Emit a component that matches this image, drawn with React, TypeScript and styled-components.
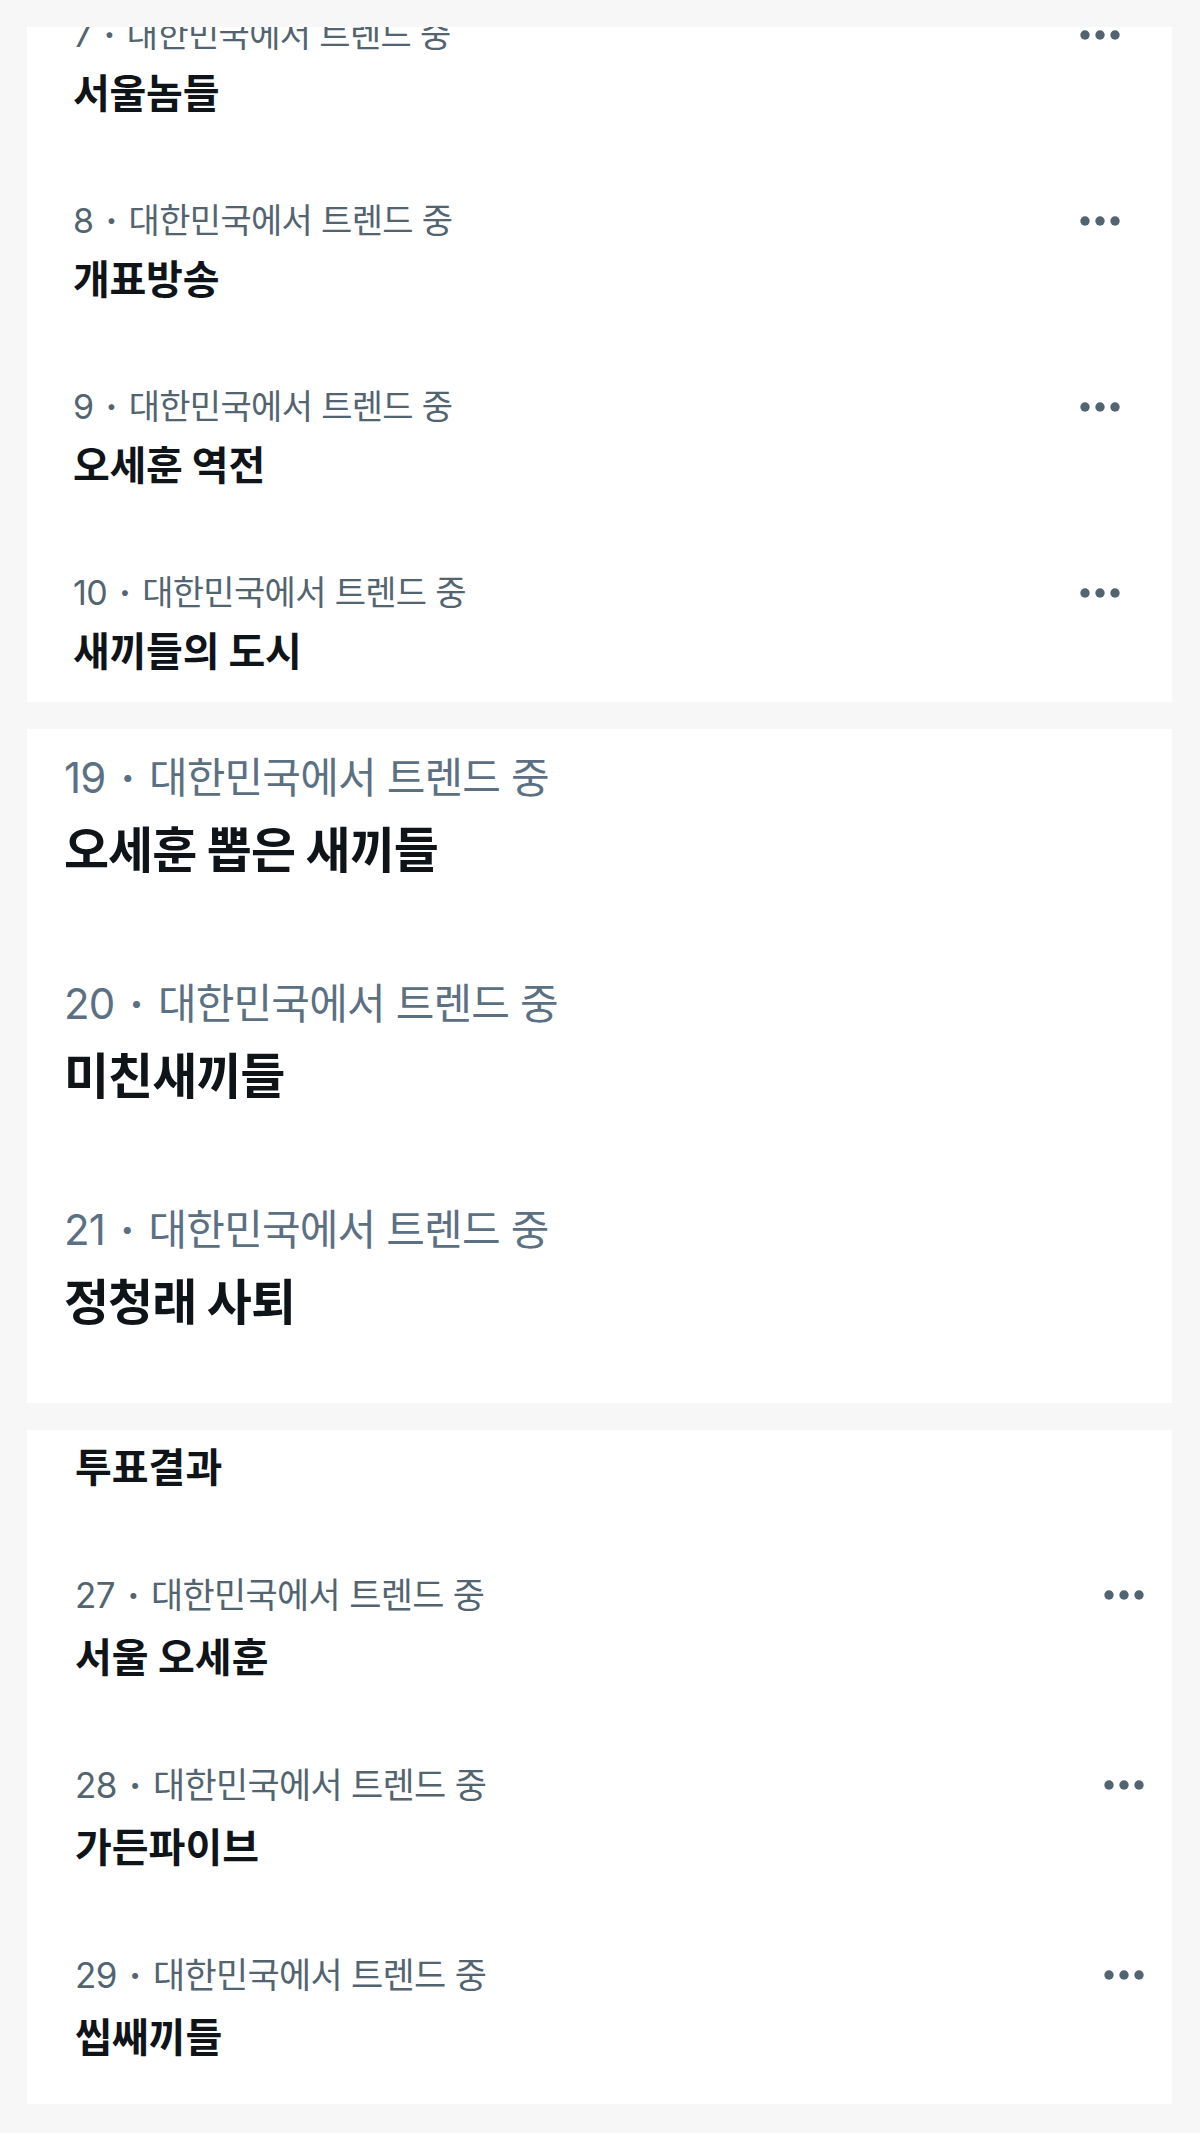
import styled, { createGlobalStyle } from 'styled-components';

interface Look {
  metaSize: number;
  metaLine: number;
  titleSize: number;
  titleLine: number;
  titleSpacing: number;
  padTop: number;
  gap: number;
  padBottom: number;
  padLeft: number;
  padRight: number;
  metaColor: string;
  moreWidth?: number;
}

interface Trend {
  rank: number;
  title: string;
}

const GlobalStyle = createGlobalStyle`
  html, body {
    margin: 0;
    padding: 0;
    background: #f7f7f7;
  }
  body {
    font-family: Inter, "Noto Sans CJK KR", sans-serif;
    -webkit-font-smoothing: antialiased;
  }
`;

const Page = styled.div`
  display: flex;
  flex-direction: column;
  gap: 27px;
  padding: 27px 28px 28px 27px;
  background: #f7f7f7;
`;

const Card = styled.section<{ $height: number }>`
  height: ${(p) => p.$height}px;
  overflow: hidden;
  background: #ffffff;
`;

// the lists are screenshots of a scrolled timeline, so the first row may sit above the card top
const TrendList = styled.div<{ $scroll: number }>`
  margin-top: ${(p) => -p.$scroll}px;
`;

const Row = styled.div<{ $look: Look }>`
  display: flex;
  justify-content: space-between;
  align-items: flex-start;
  padding: ${(p) =>
    `${p.$look.padTop}px ${p.$look.padRight}px ${p.$look.padBottom}px ${p.$look.padLeft}px`};
`;

const TextBlock = styled.div`
  display: flex;
  flex-direction: column;
`;

const Meta = styled.div<{ $look: Look }>`
  font-size: ${(p) => p.$look.metaSize}px;
  line-height: ${(p) => p.$look.metaLine}px;
  letter-spacing: -0.02em;
  color: ${(p) => p.$look.metaColor};
  font-weight: 400;
  white-space: nowrap;
`;

const Sep = styled.span`
  margin: 0 0.1em;
  font-weight: 700;
`;

const Title = styled.div<{ $look: Look }>`
  margin-top: ${(p) => p.$look.gap}px;
  font-size: ${(p) => p.$look.titleSize}px;
  line-height: ${(p) => p.$look.titleLine}px;
  letter-spacing: ${(p) => p.$look.titleSpacing}px;
  font-weight: 700;
  color: #0f1419;
  white-space: nowrap;
`;

const More = styled.div<{ $look: Look }>`
  display: flex;
  align-items: center;
  height: ${(p) => p.$look.metaLine}px;
  color: #536471;
`;

const MoreDots = ({ width }: { width: number }) => (
  <svg width={width} height={10} viewBox="0 0 40 10" fill="currentColor">
    <circle cx="5" cy="5" r="4.7" />
    <circle cx="20" cy="5" r="4.7" />
    <circle cx="35" cy="5" r="4.7" />
  </svg>
);

const firstLook: Look = {
  metaSize: 34,
  metaLine: 40,
  titleSize: 40,
  titleLine: 44,
  titleSpacing: -0.25,
  padTop: 20,
  gap: 17,
  padBottom: 65,
  padLeft: 46,
  padRight: 52,
  metaColor: '#536471',
  moreWidth: 40,
};

const bigLook: Look = {
  metaSize: 42,
  metaLine: 48,
  titleSize: 49,
  titleLine: 54,
  titleSpacing: -1,
  padTop: 25,
  gap: 22,
  padBottom: 77,
  padLeft: 37,
  padRight: 37,
  metaColor: '#5b7083',
};

const lastLook: Look = {
  metaSize: 35,
  metaLine: 40,
  titleSize: 40,
  titleLine: 44,
  titleSpacing: 0,
  padTop: 20,
  gap: 21,
  padBottom: 65,
  padLeft: 48,
  padRight: 27,
  metaColor: '#536471',
  moreWidth: 42,
};

const groups: { look: Look; scroll: number; height: number; trends: Trend[] }[] = [
  {
    look: firstLook,
    scroll: 32,
    height: 675,
    trends: [
      { rank: 7, title: '서울놈들' },
      { rank: 8, title: '개표방송' },
      { rank: 9, title: '오세훈 역전' },
      { rank: 10, title: '새끼들의 도시' },
    ],
  },
  {
    look: bigLook,
    scroll: 0,
    height: 674,
    trends: [
      { rank: 19, title: '오세훈 뽑은 새끼들' },
      { rank: 20, title: '미친새끼들' },
      { rank: 21, title: '정청래 사퇴' },
    ],
  },
  {
    look: lastLook,
    scroll: 65,
    height: 674,
    trends: [
      { rank: 26, title: '투표결과' },
      { rank: 27, title: '서울 오세훈' },
      { rank: 28, title: '가든파이브' },
      { rank: 29, title: '씹쌔끼들' },
    ],
  },
];

const TrendRow = ({ trend, look }: { trend: Trend; look: Look }) => (
  <Row $look={look}>
    <TextBlock>
      <Meta $look={look}>
        {trend.rank} <Sep>·</Sep> 대한민국에서 트렌드 중
      </Meta>
      <Title $look={look}>{trend.title}</Title>
    </TextBlock>
    {look.moreWidth && (
      <More $look={look}>
        <MoreDots width={look.moreWidth} />
      </More>
    )}
  </Row>
);

const App = () => {
  return (
    <Page>
      <GlobalStyle />
      {groups.map((group) => (
        <Card key={group.trends[0].rank} $height={group.height}>
          <TrendList $scroll={group.scroll}>
            {group.trends.map((trend) => (
              <TrendRow key={trend.rank} trend={trend} look={group.look} />
            ))}
          </TrendList>
        </Card>
      ))}
    </Page>
  );
};

export default App;
